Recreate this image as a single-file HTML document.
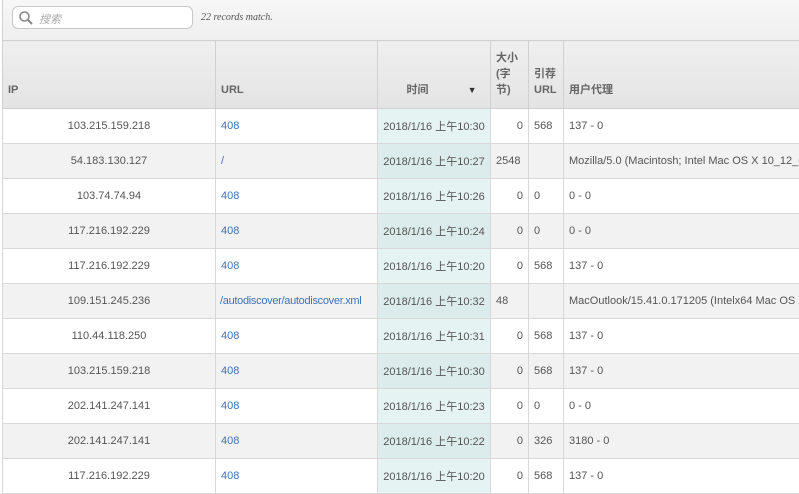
<!DOCTYPE html>
<html><head><meta charset="utf-8"><style>
body{margin:0;width:799px;height:493px;overflow:hidden;background:#fff;font-family:"Liberation Sans","Noto Sans CJK SC",sans-serif;}
.top{position:absolute;left:2px;top:0;width:797px;height:40px;background:linear-gradient(#f7f7f7,#efefef);border-left:1px solid #d0d0d0;}
.search{position:absolute;left:9px;top:6px;width:179px;height:21px;border:1px solid #c8c8c8;border-radius:6px;background:#fff;}
.search span{position:absolute;left:26px;top:4px;font-size:11px;color:#aaa;font-style:italic}
.cnt{position:absolute;left:198px;top:12px;font-family:"Liberation Serif",serif;font-style:italic;font-size:10px;color:#555}
table{position:absolute;left:2px;top:40px;border-collapse:collapse;table-layout:fixed;width:830px;font-size:11px;color:#555}
td,th{border:1px solid #d8d8d8;height:34px;padding:0 5px;white-space:nowrap;overflow:hidden}
th{height:57px;background:linear-gradient(#efefef,#e4e4e4);vertical-align:bottom;text-align:left;font-size:11px;color:#666;padding-bottom:10px;line-height:16px;border-color:#d0d0d0}
tr:nth-child(odd) td{background:#f2f2f2}
td.t{background:#e6f3f3!important;text-align:center;padding:0 2px}
tr:nth-child(odd) td.t{background:#dcecec!important}
td.ip{text-align:center}
td.r{text-align:right}
a{color:#3a73b8;text-decoration:none}
</style></head><body>
<div class="top"><div class="search"><svg width="16" height="16" style="position:absolute;left:5px;top:3px"><circle cx="6.5" cy="6.5" r="4.5" fill="none" stroke="#888" stroke-width="1.6"/><line x1="10" y1="10" x2="14" y2="14" stroke="#888" stroke-width="2"/></svg><span>搜索</span></div><div class="cnt">22 records match.</div></div>
<table>
<colgroup><col style="width:213px"><col style="width:162px"><col style="width:113px"><col style="width:38px"><col style="width:35px"><col></colgroup>
<tr><th>IP</th><th>URL</th><th style="text-align:center;padding-left:20px">时间 <span style="font-size:9px;margin-left:36px;color:#333">▼</span></th><th>大小<br>(字<br>节)</th><th>引荐<br>URL</th><th>用户代理</th></tr>
<tr><td class="ip">103.215.159.218</td><td><a>408</a></td><td class="t">2018/1/16 上午10:30</td><td class="r">0</td><td>568</td><td>137 - 0</td></tr>
<tr><td class="ip">54.183.130.127</td><td><a>/</a></td><td class="t">2018/1/16 上午10:27</td><td>2548</td><td></td><td>Mozilla/5.0 (Macintosh; Intel Mac OS X 10_12_6)</td></tr>
<tr><td class="ip">103.74.74.94</td><td><a>408</a></td><td class="t">2018/1/16 上午10:26</td><td class="r">0</td><td>0</td><td>0 - 0</td></tr>
<tr><td class="ip">117.216.192.229</td><td><a>408</a></td><td class="t">2018/1/16 上午10:24</td><td class="r">0</td><td>0</td><td>0 - 0</td></tr>
<tr><td class="ip">117.216.192.229</td><td><a>408</a></td><td class="t">2018/1/16 上午10:20</td><td class="r">0</td><td>568</td><td>137 - 0</td></tr>
<tr><td class="ip">109.151.245.236</td><td style="padding:0 4px;letter-spacing:-0.3px"><a>/autodiscover/autodiscover.xml</a></td><td class="t">2018/1/16 上午10:32</td><td>48</td><td></td><td>MacOutlook/15.41.0.171205 (Intelx64 Mac OS X)</td></tr>
<tr><td class="ip">110.44.118.250</td><td><a>408</a></td><td class="t">2018/1/16 上午10:31</td><td class="r">0</td><td>568</td><td>137 - 0</td></tr>
<tr><td class="ip">103.215.159.218</td><td><a>408</a></td><td class="t">2018/1/16 上午10:30</td><td class="r">0</td><td>568</td><td>137 - 0</td></tr>
<tr><td class="ip">202.141.247.141</td><td><a>408</a></td><td class="t">2018/1/16 上午10:23</td><td class="r">0</td><td>0</td><td>0 - 0</td></tr>
<tr><td class="ip">202.141.247.141</td><td><a>408</a></td><td class="t">2018/1/16 上午10:22</td><td class="r">0</td><td>326</td><td>3180 - 0</td></tr>
<tr><td class="ip">117.216.192.229</td><td><a>408</a></td><td class="t">2018/1/16 上午10:20</td><td class="r">0</td><td>568</td><td>137 - 0</td></tr>
</table>
</body></html>
